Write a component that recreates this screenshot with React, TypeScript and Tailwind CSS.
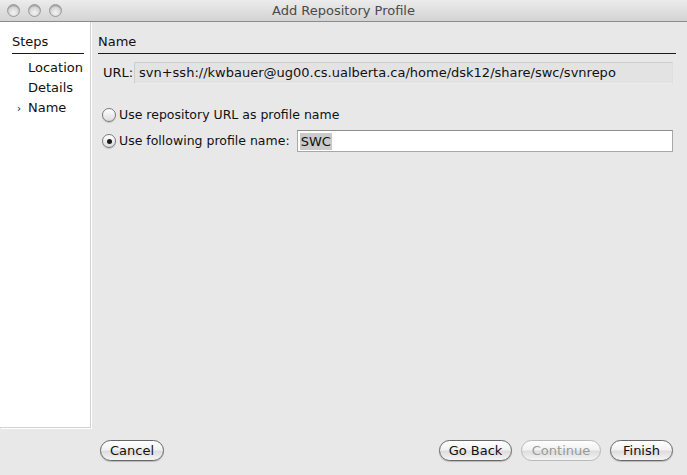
import React from "react";

const font = { fontFamily: '"Lucida Grande", "DejaVu Sans", sans-serif' };

function TrafficLight() {
  return (
    <span className="w-[13px] h-[13px] rounded-full border border-[#9a9a9a] bg-[radial-gradient(circle_at_50%_70%,#f4f4f4_0%,#d6d6d6_55%,#b8b8b8_100%)] shadow-[inset_0_1px_1px_rgba(0,0,0,0.25)]" />
  );
}

function Radio({ checked }: { checked?: boolean }) {
  return (
    <span className="w-[14px] h-[14px] shrink-0 rounded-full border border-[#7a7a7a] bg-[linear-gradient(#ffffff,#dcdcdc)] flex items-center justify-center shadow-[0_1px_1px_rgba(0,0,0,0.15)]">
      {checked && <span className="w-[5px] h-[5px] rounded-full bg-[#1a1a1a]" />}
    </span>
  );
}

function AquaButton({
  label,
  width,
  disabled,
}: {
  label: string;
  width: string;
  disabled?: boolean;
}) {
  return (
    <button
      className={`${width} h-[21px] rounded-full text-[13px] leading-none flex items-center justify-center bg-[linear-gradient(#ffffff_0%,#f2f2f2_45%,#dedede_55%,#f4f4f4_100%)] ${
        disabled
          ? "border border-[#b9b9b9] text-[#9a9a9a]"
          : "border border-[#666666] text-[#111] shadow-[0_1px_1px_rgba(0,0,0,0.2)]"
      }`}
    >
      {label}
    </button>
  );
}

export default function App() {
  return (
    <div
      className="w-[687px] h-[475px] flex flex-col bg-[#e8e8e8] overflow-hidden text-[13px] text-[#111]"
      style={font}
    >
      {/* title bar */}
      <div className="h-[22px] shrink-0 relative flex items-center bg-[linear-gradient(#ececec,#d3d3d3)] border-b border-[#8c8c8c]">
        <div className="flex items-center gap-[8px] pl-[7px]">
          <TrafficLight />
          <TrafficLight />
          <TrafficLight />
        </div>
        <div className="absolute inset-0 flex items-center justify-center text-[13px] text-[#4a4a4a]">
          Add Repository Profile
        </div>
      </div>

      <div className="flex h-[406px] shrink-0">
        {/* steps sidebar */}
        <aside className="w-[91px] shrink-0 bg-white border-r border-b border-[#d2d2d2] shadow-[1px_1px_0_#ffffff] pl-[12px] pr-[6px] pt-[12px]">
          <div className="leading-[16px] pb-[3px] border-b border-[#1a1a1a]">Steps</div>
          <ul className="mt-[4px]">
            <li className="h-[20px] flex items-center pl-[16px]">Location</li>
            <li className="h-[20px] flex items-center pl-[16px]">Details</li>
            <li className="h-[20px] flex items-center">
              <span className="w-[16px] pl-[5px] text-[10px]">›</span>
              Name
            </li>
          </ul>
        </aside>

        {/* main panel */}
        <main className="flex-1 pl-[7px] pr-[11px] pt-[12px]">
          <div className="leading-[16px] pb-[3px] border-b border-[#1a1a1a]">Name</div>
          <div className="flex items-center mt-[8px] pr-[3px]">
            <span className="pl-[5px] w-[36px]">URL:</span>
            <div className="flex-1 h-[22px] flex items-center pl-[4px] bg-[#e3e3e3] border-t border-l border-[#cdcdcd] border-r border-b border-r-[#dedede] border-b-[#ececec]">
              svn+ssh://kwbauer@ug00.cs.ualberta.ca/home/dsk12/share/swc/svnrepo
            </div>
          </div>

          <div className="flex items-center gap-[3px] mt-[22px] pl-[4px] h-[18px] text-[12.5px]">
            <Radio />
            <span>Use repository URL as profile name</span>
          </div>
          <div className="flex items-center mt-[6px] pl-[4px] pr-[3px]">
            <Radio checked />
            <span className="ml-[3px] text-[12.5px]">Use following profile name:</span>
            <div className="ml-[7px] flex-1 h-[22px] flex items-center pl-[2px] bg-white border border-[#a8a8a8] border-t-[#8e8e8e]">
              <span className="bg-[#cacaca] px-[1px] leading-[17px]">SWC</span>
            </div>
          </div>
        </main>
      </div>

      {/* buttons */}
      <div className="flex-1 flex items-start pt-[12px] pl-[100px] pr-[14px]">
        <AquaButton label="Cancel" width="w-[64px]" />
        <div className="flex-1" />
        <div className="flex gap-[9px]">
          <AquaButton label="Go Back" width="w-[73px]" />
          <AquaButton label="Continue" width="w-[80px]" disabled />
          <AquaButton label="Finish" width="w-[63px]" />
        </div>
      </div>
    </div>
  );
}
